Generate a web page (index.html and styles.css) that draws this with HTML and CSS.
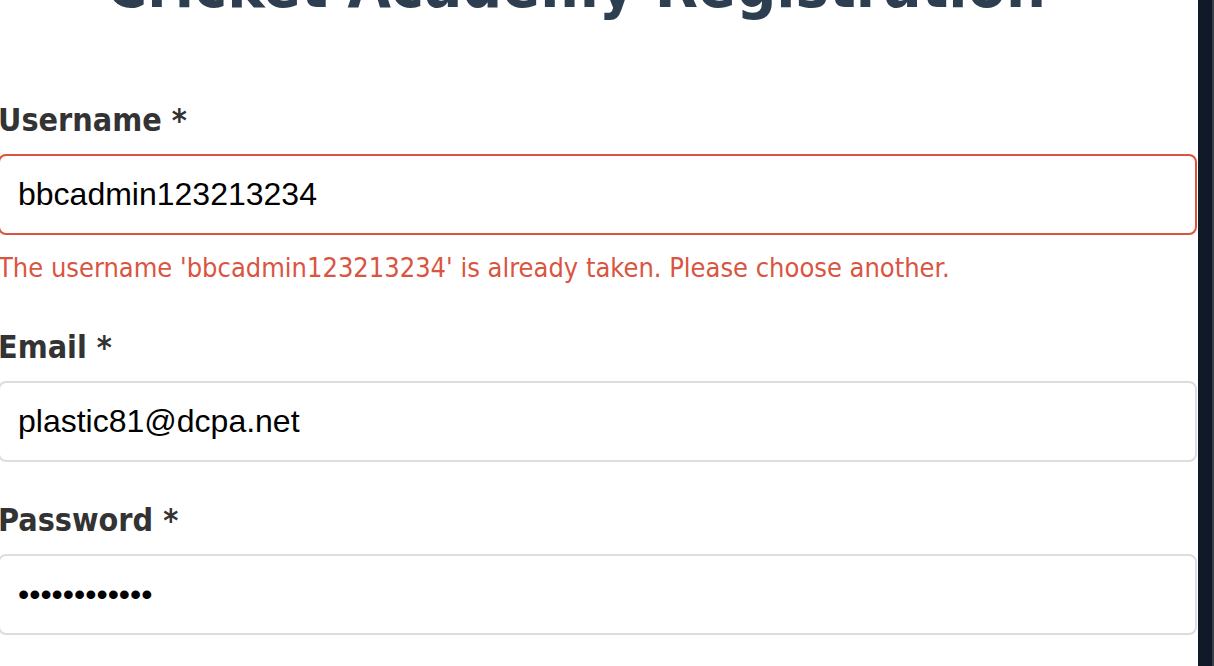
FILE: index.html
```html
<!DOCTYPE html>
<html lang="en">
<head>
<meta charset="utf-8">
<title>Cricket Academy Registration</title>
<link rel="stylesheet" href="styles.css">
</head>
<body>
<div class="page">
  <main class="main">
    <form class="form" onsubmit="return false">
      <h1 class="title">Cricket Academy Registration</h1>
      <div class="field">
        <label class="label" for="username">Username *</label>
        <input class="input input-error" id="username" type="text" value="bbcadmin123213234">
        <p class="error">The username 'bbcadmin123213234' is already taken. Please choose another.</p>
      </div>
      <div class="field">
        <label class="label" for="email">Email *</label>
        <input class="input" id="email" type="email" value="plastic81@dcpa.net">
      </div>
      <div class="field">
        <label class="label" for="password">Password *</label>
        <input class="input" id="password" type="password" value="abcdefghijkl">
      </div>
    </form>
  </main>
  <aside class="edge"></aside>
</div>
</body>
</html>
```
FILE: styles.css
```css
html, body {
  margin: 0;
  padding: 0;
  background: #ffffff;
  height: 100%;
  overflow: hidden;
}

.page {
  display: flex;
  height: 666px;
  font-family: "DejaVu Sans Condensed", "DejaVu Sans", sans-serif;
}

.main {
  flex: 1;
  min-width: 0;
  overflow: hidden;
}

.edge {
  width: 14px;
  background: #111827;
  border-right: 2px solid #3b3f4a;
}

.form {
  margin: -52px 1px 0 -2px;
}

.title {
  margin: 0 0 76px;
  padding-right: 43px;
  text-align: center;
  font-size: 62.4px;
  line-height: 76px;
  font-weight: bold;
  color: #2c3e50;
}

.field {
  display: flex;
  flex-direction: column;
  margin-bottom: 38px;
}

.label {
  display: block;
  font-size: 32px;
  line-height: 40px;
  font-weight: bold;
  color: #333333;
  margin-bottom: 14px;
}

.input {
  display: block;
  box-sizing: border-box;
  width: 100%;
  height: 81px;
  margin: 0;
  padding: 0 18px;
  border: 2px solid #dddddd;
  border-radius: 8px;
  background: #ffffff;
  font-family: "Liberation Sans", Arial, sans-serif;
  font-size: 32px;
  color: #000000;
  outline: none;
}

.input-error {
  border-color: #d9553f;
}

.error {
  margin: 15px 0 3px;
  font-size: 27px;
  line-height: 36px;
  color: #d9553f;
}
```
